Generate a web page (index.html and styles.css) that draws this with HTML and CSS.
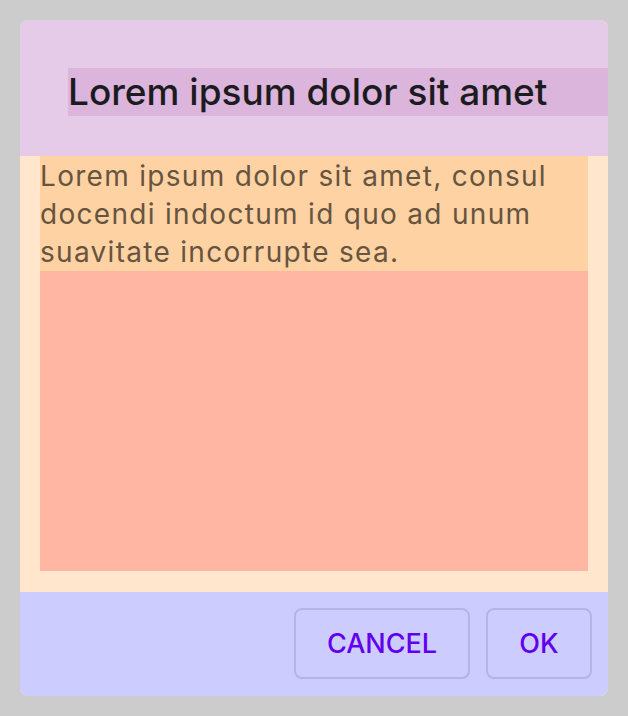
FILE: index.html
```html
<!DOCTYPE html>
<html>
<head>
<meta charset="utf-8">
<link rel="stylesheet" href="styles.css">
</head>
<body>
<div class="dialog">
  <div class="header">
    <h2 class="title">Lorem ipsum dolor sit amet</h2>
  </div>
  <div class="content">
    <p class="text">Lorem ipsum dolor sit amet, consul docendi indoctum id quo ad unum suavitate incorrupte sea.</p>
    <div class="filler"></div>
  </div>
  <div class="footer">
    <button class="btn btn-cancel">CANCEL</button>
    <button class="btn btn-ok">OK</button>
  </div>
</div>
</body>
</html>
```

FILE: styles.css
```css
html, body {
  margin: 0;
  padding: 0;
  background: #cccccc;
}
body {
  padding: 20px;
  font-family: Inter, Roboto, sans-serif;
}
.dialog {
  width: 588px;
  height: 676px;
  border-radius: 8px;
  overflow: hidden;
  display: flex;
  flex-direction: column;
  background: #ffe6cc;
}
.header {
  background: #e5cbe7;
  padding: 48px 0 40px 48px;
}
.title {
  margin: 0;
  height: 48px;
  line-height: 48px;
  background: #dbb5db;
  font-size: 37px;
  font-weight: 500;
  color: #1c1b1f;
  white-space: nowrap;
}
.content {
  flex: 1;
  padding: 0 20px 21px;
  display: flex;
  flex-direction: column;
}
.text {
  margin: 0;
  background: #ffd2a3;
  color: #675440;
  font-size: 28px;
  letter-spacing: 1.3px;
  line-height: 38px;
  padding: 1px 0 0;
}
.filler {
  flex: 1;
  background: #ffb7a3;
}
.footer {
  background: #ccccff;
  height: 104px;
  box-sizing: border-box;
  padding: 16px 16px 17px;
  display: flex;
  justify-content: flex-end;
  gap: 16px;
}
.btn {
  height: 71px;
  border: 2px solid #b7b3e6;
  border-radius: 8px;
  background: transparent;
  color: #6200ee;
  font-family: Inter, Roboto, sans-serif;
  font-size: 27px;
  font-weight: 500;
  padding: 0;
}
.btn-cancel {
  width: 176px;
}
.btn-ok {
  width: 106px;
}
```
